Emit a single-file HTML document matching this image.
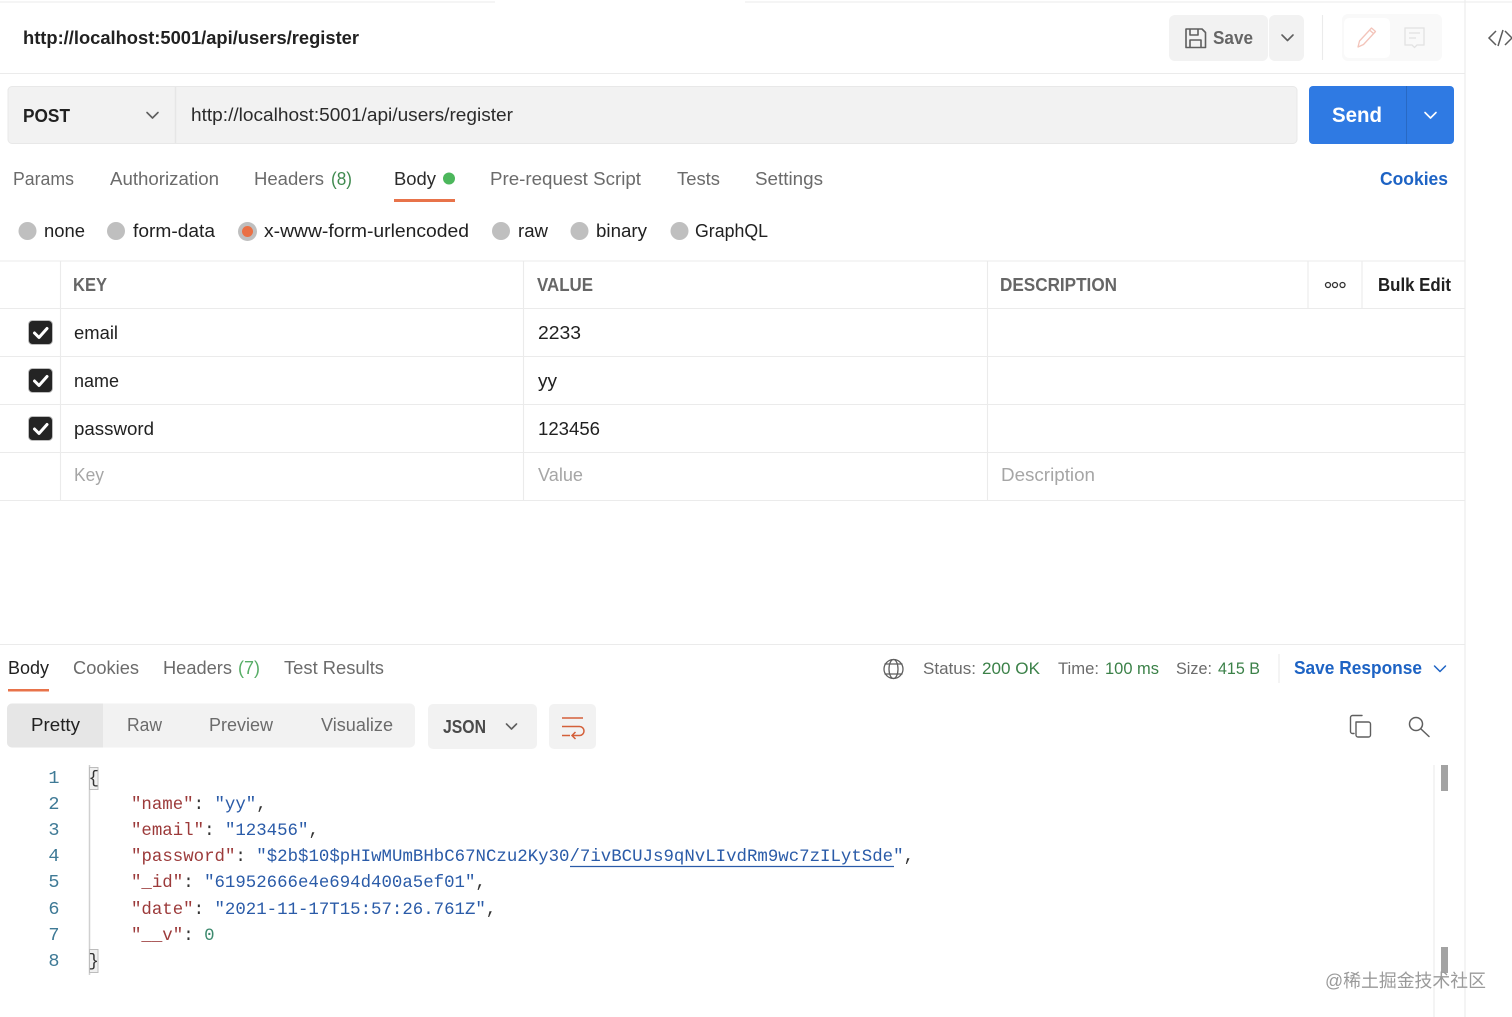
<!DOCTYPE html>
<html lang="en"><head><meta charset="utf-8"><title>Postman</title>
<style>
html,body{margin:0;padding:0;background:#fff;width:1512px;height:1017px;overflow:hidden}
svg{display:block}
text{font-family:"Liberation Sans",sans-serif;font-size:18px;fill:#212121;white-space:pre}
.g{fill:#6b6b6b}
.b{font-weight:700}
.m{font-family:"Liberation Mono",monospace;font-size:17.4px;fill:#333}
.n{fill:#3f7a96;font-size:18.5px}
.k{fill:#9c3a3a}.s{fill:#2a5ba8}.v{fill:#3d8a6e}
.l{stroke:#ebebeb;stroke-width:1.1;fill:none}
.i{fill:none;stroke:#5f5f5f;stroke-width:1.6;stroke-linecap:round;stroke-linejoin:round}
</style></head><body>
<svg width="1512" height="1017" viewBox="0 0 1512 1017" xmlns="http://www.w3.org/2000/svg">
<rect width="1512" height="1017" fill="#fff"/>
<path class="l" d="M0 2H495M745 2H1512M1465 0V1017M0 73.500H1465"/>

<text x="23" y="44" textLength="336" lengthAdjust="spacingAndGlyphs" class="b" style="font-size:18px">http://localhost:5001/api/users/register</text>

<rect x="1169" y="15" width="99" height="46" rx="6" fill="#f2f2f2"/>
<rect x="1269" y="15" width="35" height="46" rx="6" fill="#f2f2f2"/>
<path class="i" d="M1186 29h16l3.500 3.500V47.500h-19.500zM1190 29v6h8v-6M1190 47.500v-7.500h11v7.500"/>
<text x="1213" y="44" textLength="40" lengthAdjust="spacingAndGlyphs" class="b" style="fill:#666">Save</text>
<path class="i" d="M1282 35l5.500 5.500 5.500-5.500"/>
<path class="l" d="M1322.500 15V60"/>
<rect x="1342" y="14" width="100" height="47" rx="6" fill="#f9f9f9"/>
<rect x="1344" y="18" width="46" height="40" rx="5" fill="#fff"/>
<path d="M1358 47l1.500-6 12-13 4 3.500-12 13zM1369.500 30l4 3.500" fill="none" stroke="#f3c4ba" stroke-width="1.300" stroke-linejoin="round"/>
<path d="M1405 28h19v17h-7l-2.500 2.500-2.500-2.500h-7zM1409 33h11M1409 38h7" fill="none" stroke="#e2e2e2" stroke-width="1.300"/>
<path d="M1496 31l-7 7 7 7M1503 30l-5 16M1505 31l7 7-7 7" fill="none" stroke="#5c5c5c" stroke-width="1.500"/>

<rect x="8" y="86.500" width="1289" height="57" rx="4" fill="#f2f2f2" stroke="#e8e8e8"/>
<path d="M175.500 87V143" stroke="#e6e6e6" stroke-width="1.500"/>
<text x="23" y="122" textLength="47" lengthAdjust="spacingAndGlyphs" class="b">POST</text>
<path class="i" d="M147 112.500l5.500 5.500 5.500-5.500"/>
<text x="191" y="121" textLength="322" lengthAdjust="spacingAndGlyphs" style="fill:#2b2b2b">http://localhost:5001/api/users/register</text>
<rect x="1309" y="86" width="145" height="58" rx="4" fill="#2f7ae3"/>
<path d="M1406.500 86V144" stroke="#2869c4" stroke-width="1"/>
<text x="1332" y="122" textLength="50" lengthAdjust="spacingAndGlyphs" class="b" style="font-size:21px;fill:#fff">Send</text>
<path d="M1425 112.500l5.500 5.500 5.500-5.500" fill="none" stroke="#fff" stroke-width="1.600" stroke-linecap="round" stroke-linejoin="round"/>

<text x="13" y="185" textLength="61" lengthAdjust="spacingAndGlyphs" class="g">Params</text>
<text x="110" y="185" textLength="109" lengthAdjust="spacingAndGlyphs" class="g">Authorization</text>
<text x="254" y="185" textLength="70" lengthAdjust="spacingAndGlyphs" class="g">Headers</text>
<text x="331" y="185" textLength="21" lengthAdjust="spacingAndGlyphs" style="fill:#3f8a4f">(8)</text>
<text x="394" y="185" textLength="42" lengthAdjust="spacingAndGlyphs" style="fill:#2b2b2b">Body</text>
<circle cx="449" cy="178.500" r="6" fill="#4cb75c"/>
<rect x="394" y="199" width="61" height="3" fill="#e8734a"/>
<text x="490" y="185" textLength="151" lengthAdjust="spacingAndGlyphs" class="g">Pre-request Script</text>
<text x="677" y="185" textLength="43" lengthAdjust="spacingAndGlyphs" class="g">Tests</text>
<text x="755" y="185" textLength="68" lengthAdjust="spacingAndGlyphs" class="g">Settings</text>
<text x="1380" y="185" textLength="68" lengthAdjust="spacingAndGlyphs" class="b" style="fill:#1d63c4">Cookies</text>

<g fill="#bfbfbf">
<circle cx="27.500" cy="231" r="9"/><circle cx="116" cy="231" r="9"/><circle cx="247.500" cy="231.500" r="9.500"/><circle cx="501" cy="231" r="9"/><circle cx="579.500" cy="231" r="9"/><circle cx="679.500" cy="231" r="9"/>
</g>
<circle cx="247.500" cy="231.500" r="5.500" fill="#ea7045"/>
<text x="44" y="237" textLength="41" lengthAdjust="spacingAndGlyphs">none</text>
<text x="133" y="237" textLength="82" lengthAdjust="spacingAndGlyphs">form-data</text>
<text x="264" y="237" textLength="205" lengthAdjust="spacingAndGlyphs">x-www-form-urlencoded</text>
<text x="518" y="237" textLength="30" lengthAdjust="spacingAndGlyphs">raw</text>
<text x="596" y="237" textLength="51" lengthAdjust="spacingAndGlyphs">binary</text>
<text x="695" y="237" textLength="73" lengthAdjust="spacingAndGlyphs">GraphQL</text>

<path class="l" d="M0 261H1465M0 308.500H1465M0 356.500H1465M0 404.500H1465M0 452.500H1465M0 500.500H1465M60.500 261V501M523.500 261V501M987.500 261V501M1308 261V308M1362 261V308"/>
<text x="73" y="291" textLength="34" lengthAdjust="spacingAndGlyphs" class="b" style="fill:#666">KEY</text>
<text x="537" y="291" textLength="56" lengthAdjust="spacingAndGlyphs" class="b" style="fill:#666">VALUE</text>
<text x="1000" y="291" textLength="117" lengthAdjust="spacingAndGlyphs" class="b" style="fill:#666">DESCRIPTION</text>
<g fill="none" stroke="#333" stroke-width="1.300"><circle cx="1328" cy="285" r="2.500"/><circle cx="1335" cy="285" r="2.500"/><circle cx="1342.500" cy="285" r="2.500"/></g>
<text x="1378" y="291" textLength="73" lengthAdjust="spacingAndGlyphs" class="b">Bulk Edit</text>

<g>
<rect x="28.500" y="320.500" width="24" height="24" rx="4" fill="#242424" stroke="#bdbdbd"/>
<rect x="28.500" y="368.500" width="24" height="24" rx="4" fill="#242424" stroke="#bdbdbd"/>
<rect x="28.500" y="416.500" width="24" height="24" rx="4" fill="#242424" stroke="#bdbdbd"/>
<g fill="none" stroke="#fff" stroke-width="3" stroke-linecap="round" stroke-linejoin="round">
<path d="M34.500 333l4.500 4.500 8-9"/><path d="M34.500 381l4.500 4.500 8-9"/><path d="M34.500 429l4.500 4.500 8-9"/>
</g></g>
<text x="74" y="339" textLength="44" lengthAdjust="spacingAndGlyphs">email</text>
<text x="538" y="339" textLength="43" lengthAdjust="spacingAndGlyphs">2233</text>
<text x="74" y="387" textLength="45" lengthAdjust="spacingAndGlyphs">name</text>
<text x="538" y="387" textLength="19" lengthAdjust="spacingAndGlyphs">yy</text>
<text x="74" y="435" textLength="80" lengthAdjust="spacingAndGlyphs">password</text>
<text x="538" y="435" textLength="62" lengthAdjust="spacingAndGlyphs">123456</text>
<text x="74" y="481" textLength="30" lengthAdjust="spacingAndGlyphs" style="fill:#a6a6a6">Key</text>
<text x="538" y="481" textLength="45" lengthAdjust="spacingAndGlyphs" style="fill:#a6a6a6">Value</text>
<text x="1001" y="481" textLength="94" lengthAdjust="spacingAndGlyphs" style="fill:#a6a6a6">Description</text>

<path class="l" d="M0 644.500H1465"/>
<text x="8" y="674" textLength="41" lengthAdjust="spacingAndGlyphs">Body</text>
<rect x="8" y="689" width="41" height="2.500" fill="#e8734a"/>
<text x="73" y="674" textLength="66" lengthAdjust="spacingAndGlyphs" class="g">Cookies</text>
<text x="163" y="674" textLength="69" lengthAdjust="spacingAndGlyphs" class="g">Headers</text>
<text x="238" y="674" textLength="22" lengthAdjust="spacingAndGlyphs" style="fill:#57ad66">(7)</text>
<text x="284" y="674" textLength="100" lengthAdjust="spacingAndGlyphs" class="g">Test Results</text>

<g class="i" style="stroke-width:1.300"><circle cx="893.500" cy="669" r="9.500"/><ellipse cx="893.500" cy="669" rx="4.500" ry="9.500"/><path d="M885 664h17M885 674h17"/></g>
<text x="923" y="674" textLength="53" lengthAdjust="spacingAndGlyphs" class="g" style="font-size:17px">Status:</text>
<text x="982" y="674" textLength="58" lengthAdjust="spacingAndGlyphs" style="font-size:17px;fill:#3b8148">200 OK</text>
<text x="1058" y="674" textLength="41" lengthAdjust="spacingAndGlyphs" class="g" style="font-size:17px">Time:</text>
<text x="1105" y="674" textLength="54" lengthAdjust="spacingAndGlyphs" style="font-size:17px;fill:#3b8148">100 ms</text>
<text x="1176" y="674" textLength="36" lengthAdjust="spacingAndGlyphs" class="g" style="font-size:17px">Size:</text>
<text x="1218" y="674" textLength="42" lengthAdjust="spacingAndGlyphs" style="font-size:17px;fill:#3b8148">415 B</text>
<path class="l" d="M1279 654V683"/>
<text x="1294" y="674" textLength="128" lengthAdjust="spacingAndGlyphs" class="b" style="fill:#1d63c4">Save Response</text>
<path d="M1434.500 666l5.500 5.500 5.500-5.500" fill="none" stroke="#1d63c4" stroke-width="1.500" stroke-linecap="round" stroke-linejoin="round"/>

<rect x="7" y="703.500" width="408" height="44" rx="5" fill="#f2f2f2"/>
<path d="M12 703.500h91v44h-91a5 5 0 0 1-5-5v-34a5 5 0 0 1 5-5z" fill="#e6e6e6"/>
<text x="31" y="731" textLength="49" lengthAdjust="spacingAndGlyphs">Pretty</text>
<text x="127" y="731" textLength="35" lengthAdjust="spacingAndGlyphs" class="g">Raw</text>
<text x="209" y="731" textLength="64" lengthAdjust="spacingAndGlyphs" class="g">Preview</text>
<text x="321" y="731" textLength="72" lengthAdjust="spacingAndGlyphs" class="g">Visualize</text>
<rect x="428" y="704" width="109" height="45" rx="5" fill="#f2f2f2"/>
<text x="443" y="733" textLength="43" lengthAdjust="spacingAndGlyphs" class="b" style="fill:#4a4a4a">JSON</text>
<path class="i" d="M506.500 724l5 5 5-5"/>
<rect x="549" y="704" width="47" height="45" rx="5" fill="#f2f2f2"/>
<path d="M562 718h21M562 735.500h8M562 726.500h17.500a3.500 3.500 0 0 1 0 9h-6.500M575.500 732l-3.500 3.500 3.500 3.500" fill="none" stroke="#d4603a" stroke-width="1.500"/>
<path class="i" d="M1354 733.500h-1.500a2 2 0 0 1-2-2v-14a2 2 0 0 1 2-2h9.500M1356 722h12.500a2 2 0 0 1 2 2v11a2 2 0 0 1-2 2h-10.500a2 2 0 0 1-2-2z" style="stroke-width:1.400"/>
<g class="i" style="stroke-width:1.500"><circle cx="1416" cy="724" r="6.500"/><path d="M1421 729l8 7.500"/></g>

<path d="M89.500 765V975" stroke="#d0d0d0" stroke-width="1.500"/>
<rect x="89.500" y="767.500" width="8.500" height="22" fill="#efefef" stroke="#bcbcbc"/>
<rect x="89.500" y="949.500" width="8.500" height="23" fill="#efefef" stroke="#bcbcbc"/>
<text class="m n" text-anchor="end" x="59.500" y="783">1</text><text class="m n" text-anchor="end" x="59.500" y="809">2</text><text class="m n" text-anchor="end" x="59.500" y="835">3</text><text class="m n" text-anchor="end" x="59.500" y="861">4</text><text class="m n" text-anchor="end" x="59.500" y="887">5</text><text class="m n" text-anchor="end" x="59.500" y="914">6</text><text class="m n" text-anchor="end" x="59.500" y="940">7</text><text class="m n" text-anchor="end" x="59.500" y="966">8</text>
<text class="m" x="88.500" y="783">{</text>
<text class="m" x="131" y="809"><tspan class="k">"name"</tspan>: <tspan class="s">"yy"</tspan>,</text>
<text class="m" x="131" y="835"><tspan class="k">"email"</tspan>: <tspan class="s">"123456"</tspan>,</text>
<text class="m" x="131" y="861" textLength="783"><tspan class="k">"password"</tspan>: <tspan class="s">"$2b$10$pHIwMUmBHbC67NCzu2Ky30/7ivBCUJs9qNvLIvdRm9wc7zILytSde"</tspan>,</text>
<path d="M570 866.500H894" stroke="#2a5ba8" stroke-width="1.300"/>
<text class="m" x="131" y="887"><tspan class="k">"_id"</tspan>: <tspan class="s">"61952666e4e694d400a5ef01"</tspan>,</text>
<text class="m" x="131" y="914"><tspan class="k">"date"</tspan>: <tspan class="s">"2021-11-17T15:57:26.761Z"</tspan>,</text>
<text class="m" x="131" y="940"><tspan class="k">"__v"</tspan>: <tspan class="v">0</tspan></text>
<text class="m" x="88.500" y="966">}</text>

<path class="l" d="M1434 765V1017"/>
<rect x="1441" y="765" width="7" height="26" fill="#a3a3a3"/>
<rect x="1441" y="947" width="7" height="26" fill="#a3a3a3"/>
<text x="1325" y="987" textLength="161" lengthAdjust="spacingAndGlyphs" style='font-family:"Liberation Sans","Noto Sans CJK SC",sans-serif;font-size:18px;fill:#9a9a9a'>@稀土掘金技术社区</text>
</svg>
</body></html>
